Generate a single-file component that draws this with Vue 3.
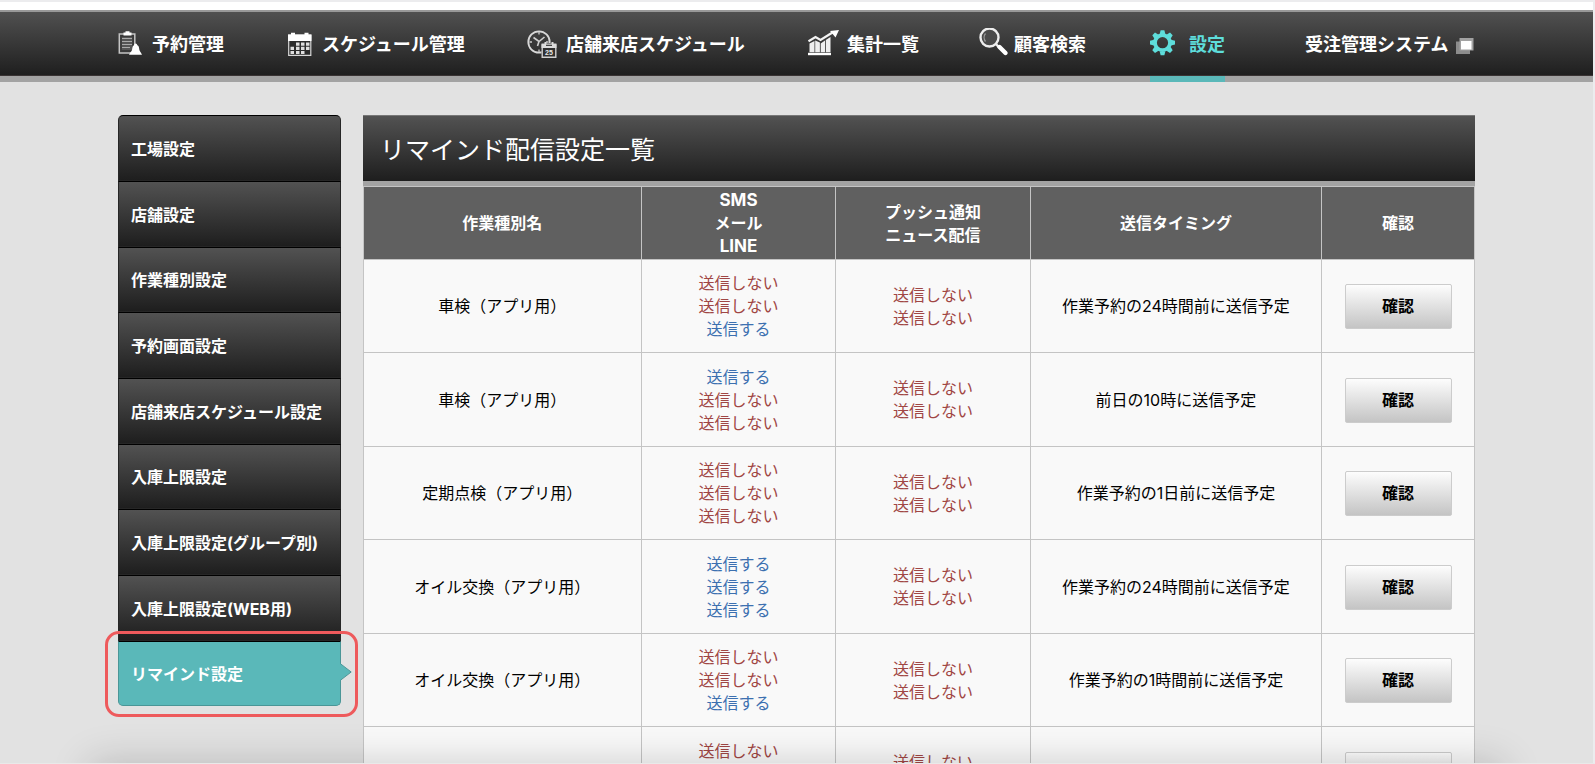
<script setup>
import { ref } from 'vue'

const NO = '送信しない'
const YES = '送信する'

const navItems = [
  { icon: 'clipboard', label: '予約管理', width: 34 },
  { icon: 'calendar', label: 'スケジュール管理', width: 34 },
  { icon: 'clock', label: '店舗来店スケジュール', width: 39 },
  { icon: 'chart', label: '集計一覧', width: 39 },
  { icon: 'search', label: '顧客検索', width: 35 },
  { icon: 'gear', label: '設定', width: 39, active: true },
  { icon: '', label: '受注管理システム', external: true },
]

const sideItems = [
  '工場設定',
  '店舗設定',
  '作業種別設定',
  '予約画面設定',
  '店舗来店スケジュール設定',
  '入庫上限設定',
  '入庫上限設定(グループ別)',
  '入庫上限設定(WEB用)',
  'リマインド設定',
]
const current = ref('リマインド設定')

const rows = [
  { name: '車検（アプリ用）', direct: [NO, NO, YES], push: [NO, NO], timing: '作業予約の24時間前に送信予定' },
  { name: '車検（アプリ用）', direct: [YES, NO, NO], push: [NO, NO], timing: '前日の10時に送信予定' },
  { name: '定期点検（アプリ用）', direct: [NO, NO, NO], push: [NO, NO], timing: '作業予約の1日前に送信予定' },
  { name: 'オイル交換（アプリ用）', direct: [YES, YES, YES], push: [NO, NO], timing: '作業予約の24時間前に送信予定' },
  { name: 'オイル交換（アプリ用）', direct: [NO, NO, YES], push: [NO, NO], timing: '作業予約の1時間前に送信予定' },
  { name: '', direct: [NO, NO, NO], push: [NO, NO], timing: '' },
]
</script>

<template>
  <div class="page">
    <header class="header">
      <nav class="nav container">
        <a v-for="item in navItems" :key="item.label" href="#" class="nav-item" :class="{ active: item.active }">
          <svg v-if="item.icon" :width="item.width" height="32" :viewBox="`0 0 ${item.width} 32`" aria-hidden="true">
            <g v-if="item.icon === 'clipboard'">
              <path d="M1.300 6h15.500v19H1.300z" fill="#3a3a3a" stroke="#c4c4c4" stroke-width="1.500" />
              <path d="M3.800 9h10.500v13H3.800z" fill="#555" />
              <path d="M5.500 4.500h2v-1.200h4v1.200h2V7.500h-8z" fill="#fff" />
              <path d="M4 10.500h10M4 13.500h10M4 16.500h10M4 19.500h8" stroke="#aaa" stroke-width="1.200" />
              <path d="M17.500 15.500c1.200 0 1.600 1 1.900 1.800 1.800.8 1.600 2.700 2 4.700.4 1.500 1.600 2.500 2.600 4.700H11c1-2.200 2.700-3.200 3-4.700.4-2 .2-3.900 2-4.700.2-.8.400-1.800 1.500-1.800z" fill="#fff" />
            </g>
            <g v-else-if="item.icon === 'calendar'">
              <path d="M.7 7h22.100v20.300H.7z" fill="#2b2b2b" stroke="#d8d8d8" stroke-width="1.200" />
              <path d="M0 6.500h23.500V13H0zM3 4.800h4v2H3zM16.500 4.800h4v2h-4z" fill="#fff" />
              <path d="M8 14.500h3.500v3.200H8zM13 14.500h3.500v3.200H13zM18 14.500h3.500v3.200H18zM2.500 18.700H6v3.200H2.500zM8 18.700h3.500v3.200H8zM13 18.700h3.500v3.200H13zM18 18.700h3.500v3.200H18zM2.500 23H6v3H2.500zM8 23h3.500v3H8zM13 23h3.500v3H13z" fill="#dedede" />
            </g>
            <g v-else-if="item.icon === 'clock'">
              <circle cx="12" cy="14" r="10.700" fill="none" stroke="#d8d8d8" stroke-width="1.800" />
              <path d="M12 4v2.500M2.500 14H5M19 14h2.500M12 21.500V24" stroke="#ccc" stroke-width="1.300" />
              <path d="M6.500 9.500l5.500 4 5.500-4.500M12 13.500L10.500 18" fill="none" stroke="#d0d0d0" stroke-width="1.600" />
              <path d="M14.500 15h15v15h-15z" fill="#2c2c2c" />
              <path d="M15.200 17h13.600v12.200H15.200z" fill="#303030" stroke="#d0d0d0" stroke-width="1.400" />
              <path d="M14.500 15.500h15v4.500h-15zM17.500 14h2v3h-2zM24.500 14h2v3h-2z" fill="#dcdcdc" />
              <path d="M19 16.700h6v1.300h-6z" fill="#444" />
              <text x="22" y="27" text-anchor="middle" class="icon-date">25</text>
            </g>
            <g v-else-if="item.icon === 'chart'">
              <path d="M0 24.800h23v2.400H0z" fill="#fff" />
              <path d="M1.500 15.500l5-2.500v11.200h-5zM7.200 12.500l4.700 2v9.700H7.200zM12.700 15.500l4.300-3v11.700h-4.300zM17.800 12l4.700-3v15.200h-4.700z" fill="#efefef" />
              <path d="M.5 13.300l7-4.300 5 3 12-7.500" fill="none" stroke="#f4f4f4" stroke-width="2.200" />
              <path d="M22 3l9-1-3.500 7.500-2-2.500z" fill="#fff" />
            </g>
            <g v-else-if="item.icon === 'search'">
              <ellipse cx="10.500" cy="9.500" rx="9" ry="9" fill="#4a4a4a" stroke="#ededed" stroke-width="2.400" />
              <path d="M6.500 5.500c-1.800 2-1.800 5.500 0 8" fill="none" stroke="#999" stroke-width="1.300" />
              <path d="M17 16l3 3.500" stroke="#eee" stroke-width="2.400" />
              <path d="M20.500 19l6 6" stroke="#fff" stroke-width="4.400" stroke-linecap="round" />
            </g>
            <g v-else>
              <g transform="translate(12.500 14.700)" fill="#5edddb">
                <path v-for="n in 8" :key="n" :transform="`rotate(${n * 45})`" d="M-2.900-8.500L-1.900-12.500H1.900L2.900-8.500z" />
                <circle r="7.500" fill="none" stroke="#5edddb" stroke-width="3.800" />
              </g>
            </g>
          </svg>
          <span>{{ item.label }}</span>
          <svg v-if="item.external" class="external" width="18" height="16" viewBox="0 0 18 16" aria-hidden="true">
            <path d="M0 3.500h14V16H0z" fill="#8c8c8c" />
            <path d="M3.500 0H17.500v12.500H3.500z" fill="#a2a2a2" />
            <path d="M5 3h10.500v8.500H5z" fill="#fff" />
          </svg>
        </a>
      </nav>
    </header>

    <div class="body container">
      <aside class="sidebar">
        <ul class="side-list">
          <li v-for="label in sideItems" :key="label" class="side-row">
            <a href="#" class="side-link" :class="{ active: label === current }">{{ label }}</a>
            <template v-if="label === current">
              <svg class="pointer" width="12" height="18" viewBox="0 0 12 18" aria-hidden="true">
                <path d="M0 .5L11 9 0 17.500z" fill="#5ab8b9" />
                <path d="M.5.8L11.200 9 .5 17.200" fill="none" stroke="#4a9697" />
              </svg>
              <span class="callout"></span>
            </template>
          </li>
        </ul>
      </aside>

      <main class="main">
        <h1 class="title">リマインド配信設定一覧</h1>
        <table class="table">
          <colgroup>
            <col class="col-name" /><col class="col-send" /><col class="col-send" /><col class="col-timing" /><col />
          </colgroup>
          <thead>
            <tr>
              <th scope="col">作業種別名</th>
              <th scope="col"><span class="latin">SMS</span><br />メール<br /><span class="latin">LINE</span></th>
              <th scope="col">プッシュ通知<br />ニュース配信</th>
              <th scope="col">送信タイミング</th>
              <th scope="col">確認</th>
            </tr>
          </thead>
          <tbody>
            <tr v-for="(row, i) in rows" :key="i">
              <td>{{ row.name }}</td>
              <td>
                <div v-for="(s, j) in row.direct" :key="j" :class="s === YES ? 'on' : 'off'">{{ s }}</div>
              </td>
              <td>
                <div v-for="(s, j) in row.push" :key="j" :class="s === YES ? 'on' : 'off'">{{ s }}</div>
              </td>
              <td>{{ row.timing }}</td>
              <td><button type="button" class="confirm">確認</button></td>
            </tr>
          </tbody>
        </table>
      </main>
    </div>
    <div class="bottom-shade"></div>
  </div>
</template>

<style>
body {
  margin: 0;
  background: #e2e2e2;
}
</style>

<style scoped>
.page {
  position: relative;
  box-sizing: border-box;
  height: 100vh;
  overflow: hidden;
  border-top: 2px solid #ececee;
  border-right: 2px solid #ececee;
  border-bottom: 1px solid #e9e9e9;
  background: #e2e2e2;
  color: #000;
  font-family: Inter, "Noto Sans CJK JP", sans-serif;
  font-size: 16px;
  line-height: 23px;
}
.container {
  max-width: 1357px;
  margin: 0 auto;
}
.header {
  border-top: 8px solid #fff;
  border-bottom: 6px solid #a3a3a3;
  background: linear-gradient(#525252, #1e1e1e);
  box-shadow: inset 0 2px #999, inset 0 -1px #3a3434;
}
.nav {
  display: grid;
  grid-template-columns: 170fr 239fr 281fr 171fr 171fr 155fr 170fr;
  height: 66px;
}
.nav-item {
  position: relative;
  display: flex;
  align-items: center;
  justify-self: start;
  padding-top: 2px;
  color: #fff;
  font-size: 18px;
  font-weight: 700;
  text-decoration: none;
  white-space: nowrap;
}
.nav-item svg {
  flex: none;
}
.nav-item.active {
  color: #5edddb;
}
.nav-item.active::after {
  content: "";
  position: absolute;
  left: 0;
  right: 0;
  bottom: -6px;
  height: 6px;
  background: #5ab8b9;
}
.nav-item .external {
  margin: 3px 0 0 8px;
}
.icon-date {
  fill: #e8e8e8;
  font-family: "Liberation Sans", sans-serif;
  font-size: 7px;
  font-weight: 700;
}
.body {
  display: flex;
  align-items: flex-start;
  gap: 22px;
  padding-top: 33px;
}
.sidebar {
  flex: none;
  width: 223px;
}
.side-list {
  margin: 0;
  padding: 0;
  list-style: none;
}
.side-row {
  position: relative;
  height: 66px;
}
.side-row:nth-child(3n) {
  height: 65px;
}
.side-link {
  display: flex;
  align-items: center;
  box-sizing: border-box;
  height: 100%;
  padding: 2px 12px 0;
  border: 1px solid #262626;
  border-top-color: #000;
  background: linear-gradient(#525252, #1e1e1e);
  color: #fff;
  font-weight: 700;
  text-decoration: none;
  white-space: nowrap;
}
.side-row:first-child .side-link {
  border-radius: 5px 5px 0 0;
}
.side-row:last-child .side-link {
  border-radius: 0 0 5px 5px;
}
.side-link.active {
  border-color: #000 #4a9697 #4a9697;
  background: #5ab8b9;
}
.pointer {
  position: absolute;
  left: 100%;
  top: 22px;
  margin-left: -1px;
}
.callout {
  position: absolute;
  inset: -10px -17px -11px -13px;
  border: 3px solid #ee5a5c;
  border-radius: 14px;
  pointer-events: none;
}
.main {
  flex: 1;
  min-width: 0;
}
.title {
  box-sizing: border-box;
  height: 71px;
  margin: 0;
  padding: 0 17px;
  border-top: 1px solid #777;
  border-bottom: 5px solid #a3a3a3;
  background: linear-gradient(#525252, #1e1e1e);
  color: #fff;
  font-size: 25px;
  font-weight: 400;
  line-height: 69px;
}
.table {
  width: 100%;
  table-layout: fixed;
  border-collapse: collapse;
  text-align: center;
}
.col-name {
  width: 25%;
}
.col-send {
  width: 17.5%;
}
.col-timing {
  width: 26.25%;
}
.table th,
.table td {
  box-sizing: border-box;
  padding: 1px 0 0;
  border: 1px solid #c4c4c4;
  vertical-align: middle;
}
.table th {
  height: 73px;
  background: #606060;
  color: #fff;
  font-weight: 700;
}
.table td {
  height: 93px;
  background: #f9f9f9;
}
.table tr:nth-child(even) td {
  height: 94px;
}
.latin {
  font-size: 17px;
}
.off {
  color: #a04644;
}
.on {
  color: #3c70b0;
}
.confirm {
  display: block;
  width: 107px;
  height: 45px;
  margin: 0 auto;
  padding: 0;
  border: 1px solid #ccc;
  border-radius: 2px;
  background: linear-gradient(#fdfdfd, #c4c4c4);
  color: #000;
  font: inherit;
  font-weight: 700;
}
.bottom-shade {
  position: absolute;
  top: 100%;
  left: 90px;
  right: 90px;
  height: 100px;
  box-shadow: 0 0 40px rgba(0, 0, 0, 0.19);
}
</style>
